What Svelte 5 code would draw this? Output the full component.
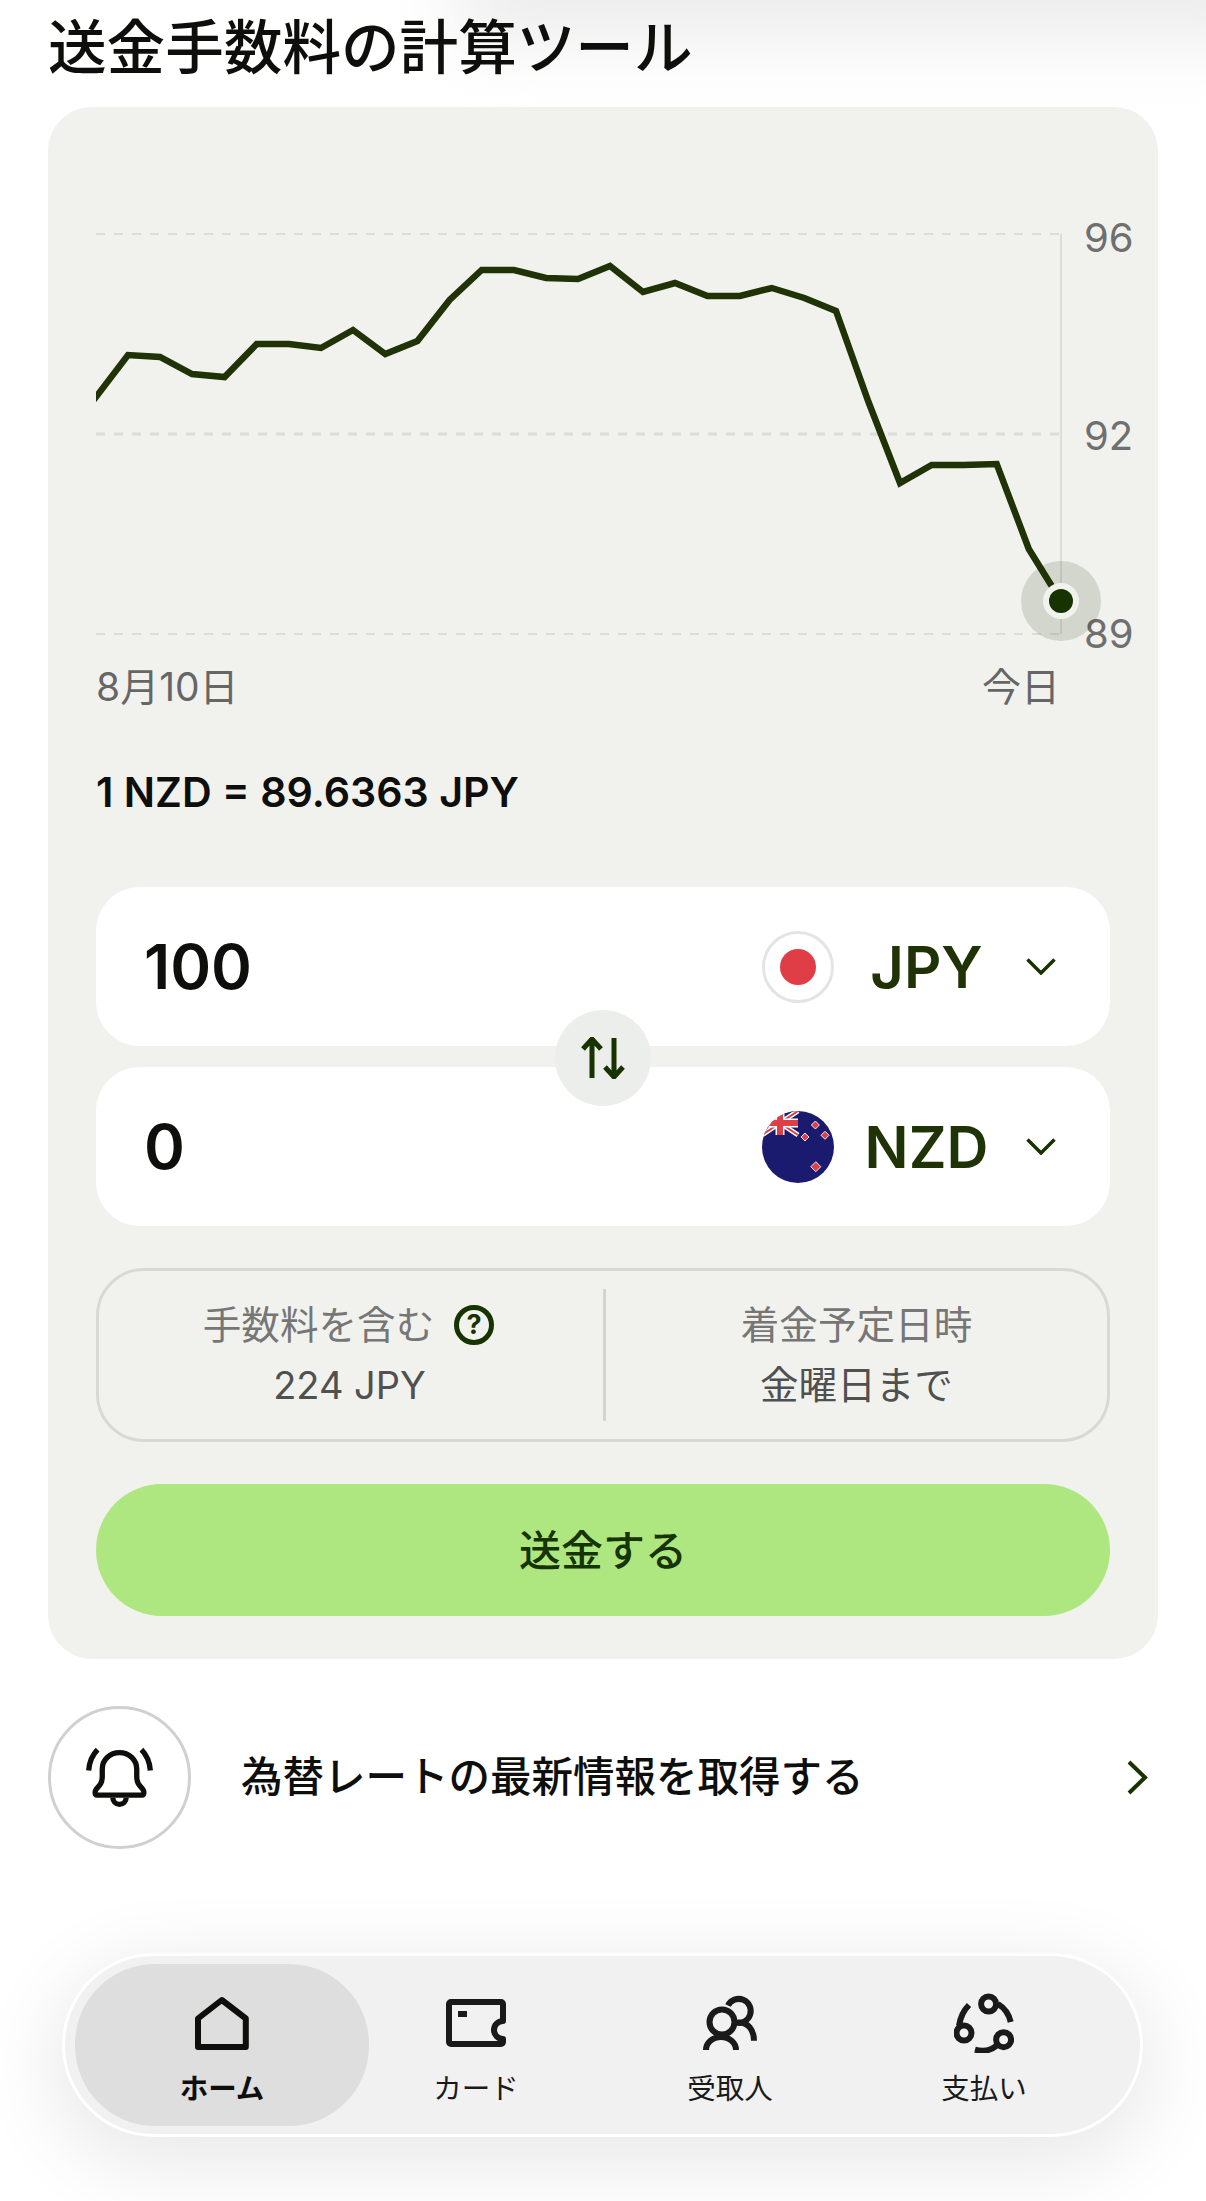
<script>
  // chart points in page px, offset by the svg viewBox
  const points = [
    [88, 407.5], [128, 355], [160, 357], [192, 374], [224.6, 377], [256.7, 344], [289, 344], [321, 348],
    [353, 330], [385.3, 354], [417.4, 341], [449.6, 300], [481.7, 270], [514, 270], [546, 278], [578, 279],
    [610, 266], [643, 292], [675, 283], [707.5, 296], [740, 296], [771.8, 288], [804.3, 298], [836, 311],
    [868.5, 402], [900, 483], [931.7, 465], [964, 465], [996.7, 464], [1028.8, 549], [1061, 601]
  ];
  const line = points.map((p) => p.join(',')).join(' ');
  const grid = [
    { y: 234, label: '96', w: 2, base: 252 },
    { y: 434, label: '92', w: 3, base: 450 },
    { y: 634, label: '89', w: 2, base: 648 }
  ];
  const tabs = [
    { id: 'home', label: 'ホーム', active: true },
    { id: 'card', label: 'カード' },
    { id: 'people', label: '受取人' },
    { id: 'pay', label: '支払い' }
  ];
</script>

<div class="page">
  <div class="top-blur"></div>
  <h1>送金手数料の計算ツール</h1>

  <section class="card">
    <svg class="chart" viewBox="96 200 1062 450" width="1062" height="450">
      <defs><clipPath id="plot"><rect x="96" y="200" width="1062" height="450" /></clipPath></defs>
      {#each grid as g}
        <line class="grid" x1="96" x2="1061" y1={g.y} y2={g.y} stroke-width={g.w} />
        <text class="tick" x="1084" y={g.base}>{g.label}</text>
      {/each}
      <line class="axis" x1="1061" x2="1061" y1="234" y2="634" />
      <circle cx="1061" cy="601" r="40" fill="#163300" fill-opacity="0.14" />
      <polyline class="rate" points={line} clip-path="url(#plot)" />
      <circle cx="1061" cy="601" r="18" fill="#f1f2ee" />
      <circle cx="1061" cy="601" r="12" fill="#163300" />
    </svg>

    <div class="dates">
      <span>8月10日</span>
      <span>今日</span>
    </div>

    <p class="rate-text">1 NZD = 89.6363 JPY</p>

    <div class="inputs">
      <div class="input-row">
        <span class="amount">100</span>
        <svg class="flag" viewBox="0 0 72 72" width="72" height="72">
          <circle cx="36" cy="36" r="34.5" fill="#fff" stroke="#e4e4e4" stroke-width="3" />
          <circle cx="36" cy="36" r="18" fill="#e03e47" />
        </svg>
        <span class="currency">JPY</span>
        <svg class="chev" viewBox="0 0 30 17" width="30" height="17"><path d="M1.5 1.5 15 15 28.500 1.500" /></svg>
      </div>
      <div class="input-row">
        <span class="amount">0</span>
        <svg class="flag" viewBox="0 0 72 72" width="72" height="72">
          <defs><clipPath id="nz"><circle cx="36" cy="36" r="36" /></clipPath></defs>
          <g clip-path="url(#nz)">
            <rect width="72" height="72" fill="#1a1a6e" />
            <rect width="36" height="24" fill="#1a1a6e" />
            <path d="M0 0 36 24M36 0 0 24" stroke="#fff" stroke-width="5" />
            <path d="M0 0 36 24M36 0 0 24" stroke="#dd3e47" stroke-width="2" />
            <path d="M18 0V24M0 12H36" stroke="#fff" stroke-width="9" />
            <path d="M18 0V24M0 12H36" stroke="#dd3e47" stroke-width="6" />
            <g fill="#dd3e47" stroke="#e8e8f0" stroke-width="1">
              <path d="M53.400 10 57.400 14 53.400 18 49.400 14Z" />
              <path d="M63 20.300 67 24.300 63 28.300 59 24.300Z" />
              <path d="M43 22 47 26 43 30 39 26Z" />
              <path d="M53.800 50.700 58.800 55.700 53.800 60.700 48.800 55.700Z" />
            </g>
          </g>
        </svg>
        <span class="currency">NZD</span>
        <svg class="chev" viewBox="0 0 30 17" width="30" height="17"><path d="M1.5 1.5 15 15 28.500 1.500" /></svg>
      </div>
      <button class="swap" aria-label="swap">
        <svg viewBox="0 0 44 42" width="44" height="42">
          <path d="M11 41V3M2 12 11 2 20 12M33 1V39M24 30 33 40 42 30" />
        </svg>
      </button>
    </div>

    <div class="fees">
      <div class="fee-col first">
        <div class="fee-label">
          <span class="cjk">手数料を含む</span>
          <svg viewBox="0 0 40 40" width="40" height="40">
            <circle cx="20" cy="20" r="17.500" fill="none" stroke="#163300" stroke-width="5" />
            <text x="20" y="29" text-anchor="middle" class="help">?</text>
          </svg>
        </div>
        <div class="fee-value">224 JPY</div>
      </div>
      <div class="fee-col split">
        <div class="fee-label"><span class="cjk">着金予定日時</span></div>
        <div class="fee-value"><span class="cjk">金曜日まで</span></div>
      </div>
    </div>

    <button class="send"><span class="cjk">送金する</span></button>
  </section>

  <div class="alert">
    <div class="bell">
      <svg viewBox="160 170 220 190" width="73" height="63">
        <path d="M202 318H338C345 318 345 306 340 300 328 287 322 280 322 262V240C322 210 298 190 270 190S218 210 218 240V262C218 280 212 287 200 300 195 306 195 318 202 318Z" />
        <path d="M250 326A20 20 0 0 0 290 326" />
        <path d="M204 181Q180 205 177 244M336 181Q360 205 363 244" />
      </svg>
    </div>
    <span class="alert-text">為替レートの最新情報を取得する</span>
    <svg class="alert-chev" viewBox="0 0 22 37" width="22" height="37"><path d="M3 3 19 18.500 3 34" /></svg>
  </div>

  <nav class="nav">
    {#each tabs as tab}
      <div class="tab" class:active={tab.active}>
        {#if tab.id === 'home'}
          <svg viewBox="0 -3 54 60" width="54" height="60"><path d="M26.800 4 50.800 22.500V51H3V22.500Z" /></svg>
        {:else if tab.id === 'card'}
          <svg viewBox="0 -3 60 60" width="60" height="60">
            <path d="M5 6H55A2 2 0 0 1 57 8V25A9 9 0 0 0 57 43V46A2 2 0 0 1 55 48H5A2 2 0 0 1 3 46V8A2 2 0 0 1 5 6Z" />
            <rect class="solid" x="12" y="15" width="9" height="6" />
          </svg>
        {:else if tab.id === 'people'}
          <svg viewBox="0 -3 54 60" width="54" height="60">
            <circle cx="19" cy="26" r="12.500" />
            <path d="M25 9.500A12 12 0 1 1 33 26.600" />
            <path d="M3 54A15 13 0 0 1 33 54" />
            <path d="M35 26.500C45 26 51 34 51 44.700" />
          </svg>
        {:else}
          <svg viewBox="0 0 60 60" width="60" height="60">
            <circle cx="34.600" cy="11" r="7.500" />
            <circle cx="10" cy="40" r="7.500" />
            <circle cx="49.600" cy="46.700" r="7.500" />
            <path d="M44 11Q54 17 56.700 29" />
            <path d="M15 12Q7 20 5 32.700" />
            <path d="M21 56.700Q34 60 42.400 52.700" />
          </svg>
        {/if}
        <span>{tab.label}</span>
      </div>
    {/each}
  </nav>
</div>

<style>
  :global(body) {
    margin: 0;
    background: #fff;
  }

  .page {
    position: relative;
    width: 1206px;
    height: 2201px;
    overflow: hidden;
    background: #fff;
    font-family: Inter, "Noto Sans CJK JP", sans-serif;
    color: #0e0f0c;
  }

  .top-blur {
    position: absolute;
    top: -70px;
    left: 460px;
    width: 820px;
    height: 110px;
    background: #ececec;
    filter: blur(35px);
  }

  h1 {
    position: relative;
    margin: 0 48px 11px;
    height: 96px;
    font-size: 58.6px;
    font-weight: 500;
    line-height: 96px;
    white-space: nowrap;
  }

  .card {
    margin: 0 48px;
    padding: 93px 48px 43px;
    background: #f1f2ee;
    border-radius: 44px;
  }

  .chart {
    display: block;
    overflow: visible;
  }

  .grid {
    stroke: #dcdcd8;
    stroke-dasharray: 9 9;
  }

  .axis {
    stroke: #d4d5d1;
    stroke-width: 1.5;
  }

  .rate {
    fill: none;
    stroke: #1f3307;
    stroke-width: 6.5;
    stroke-linejoin: miter;
  }

  .tick {
    font-size: 40px;
    fill: #6f6f6f;
  }

  .dates {
    display: flex;
    justify-content: space-between;
    margin-top: 13px;
    margin-bottom: -1px;
    padding-right: 50px;
    font-size: 39px;
    line-height: 48px;
    color: #666;
  }

  .rate-text {
    margin: 57px 0 0;
    font-size: 41.2px;
    font-weight: 600;
    line-height: 50px;
  }

  .inputs {
    position: relative;
    display: flex;
    flex-direction: column;
    gap: 21px;
    margin-top: 70px;
  }

  .input-row {
    display: flex;
    align-items: center;
    height: 159px;
    padding: 0 54.500px 0 48px;
    background: #fff;
    border-radius: 44px;
  }

  .amount {
    flex: 1;
    font-size: 62px;
    font-weight: 600;
  }

  .currency {
    width: 130px;
    margin-left: 28px;
    font-size: 58px;
    font-weight: 600;
    color: #1f3307;
    text-align: center;
  }

  .chev {
    margin-left: 34px;
  }

  .chev path {
    fill: none;
    stroke: #163300;
    stroke-width: 3.500;
  }

  .swap {
    position: absolute;
    top: 123px;
    left: 459px;
    display: flex;
    align-items: center;
    justify-content: center;
    width: 96px;
    height: 96px;
    padding: 0;
    border: 0;
    border-radius: 50%;
    background: #eceeeb;
  }

  .swap path {
    fill: none;
    stroke: #163300;
    stroke-width: 5;
  }

  .fees {
    display: grid;
    grid-template-columns: 1fr 1fr;
    box-sizing: border-box;
    height: 174px;
    margin-top: 42px;
    padding: 18px 0;
    border: 3px solid #d8d9d5;
    border-radius: 48px;
  }

  .fee-col {
    display: flex;
    flex-direction: column;
    align-items: center;
    justify-content: center;
  }

  .first {
    padding-right: 3px;
  }

  .split {
    border-left: 3px solid #d4d5d1;
  }

  .fee-label,
  .fee-value {
    display: flex;
    align-items: center;
    gap: 20px;
    height: 60px;
    font-size: 38px;
  }

  .fee-label svg {
    margin-right: 2px;
  }

  /* Noto CJK sits lower in the line box than the reference's font */
  .cjk {
    display: block;
    padding-bottom: 6px;
  }

  .fee-label .cjk,
  .fee-value .cjk {
    font-size: 38.6px;
  }

  .fee-label {
    color: #767676;
  }

  .fee-value {
    color: #505050;
  }

  .help {
    font-size: 27px;
    font-weight: 700;
    fill: #163300;
  }

  .send {
    display: block;
    width: 100%;
    height: 132px;
    margin-top: 42px;
    border: 0;
    border-radius: 66px;
    background: #aee77f;
    color: #163300;
    font-family: inherit;
    font-size: 42px;
    font-weight: 500;
  }

  .alert {
    display: flex;
    align-items: center;
    gap: 50px;
    margin: 47px 58px 0 48px;
  }

  .bell {
    display: flex;
    align-items: center;
    justify-content: center;
    box-sizing: border-box;
    width: 143px;
    height: 143px;
    border: 3px solid #d0d0d0;
    border-radius: 50%;
  }

  .bell path {
    fill: none;
    stroke: #0e0f0c;
    stroke-width: 16;
  }

  .alert-text {
    flex: 1;
    padding-bottom: 8px;
    font-size: 41.5px;
    font-weight: 500;
    white-space: nowrap;
  }

  .alert-chev path {
    fill: none;
    stroke: #163300;
    stroke-width: 4;
  }

  .nav {
    position: absolute;
    top: 1953px;
    left: 62px;
    display: grid;
    grid-template-columns: repeat(4, 254px);
    box-sizing: border-box;
    width: 1081px;
    height: 184px;
    padding: 8px 32px 8px 30px;
    background: #f1f1f1;
    border: 3px solid #fff;
    border-radius: 92px;
    box-shadow: 0 20px 80px 10px rgba(0, 0, 0, 0.09);
  }

  .tab {
    display: flex;
    flex-direction: column;
    align-items: center;
    justify-content: center;
    gap: 13px;
    padding-top: 9px;
    font-size: 28.5px;
    color: #1a1a1a;
  }

  .tab.active {
    margin: 0 -20px;
    background: #dedede;
    border-radius: 80px;
    font-weight: 700;
    color: #0e0f0c;
  }

  .tab svg :global(*) {
    fill: none;
    stroke: #1a1a1a;
    stroke-width: 6;
    stroke-linejoin: round;
  }

  .tab.active svg :global(*) {
    stroke: #0e0f0c;
  }

  .tab svg :global(.solid) {
    fill: #1a1a1a;
    stroke: none;
  }
</style>
